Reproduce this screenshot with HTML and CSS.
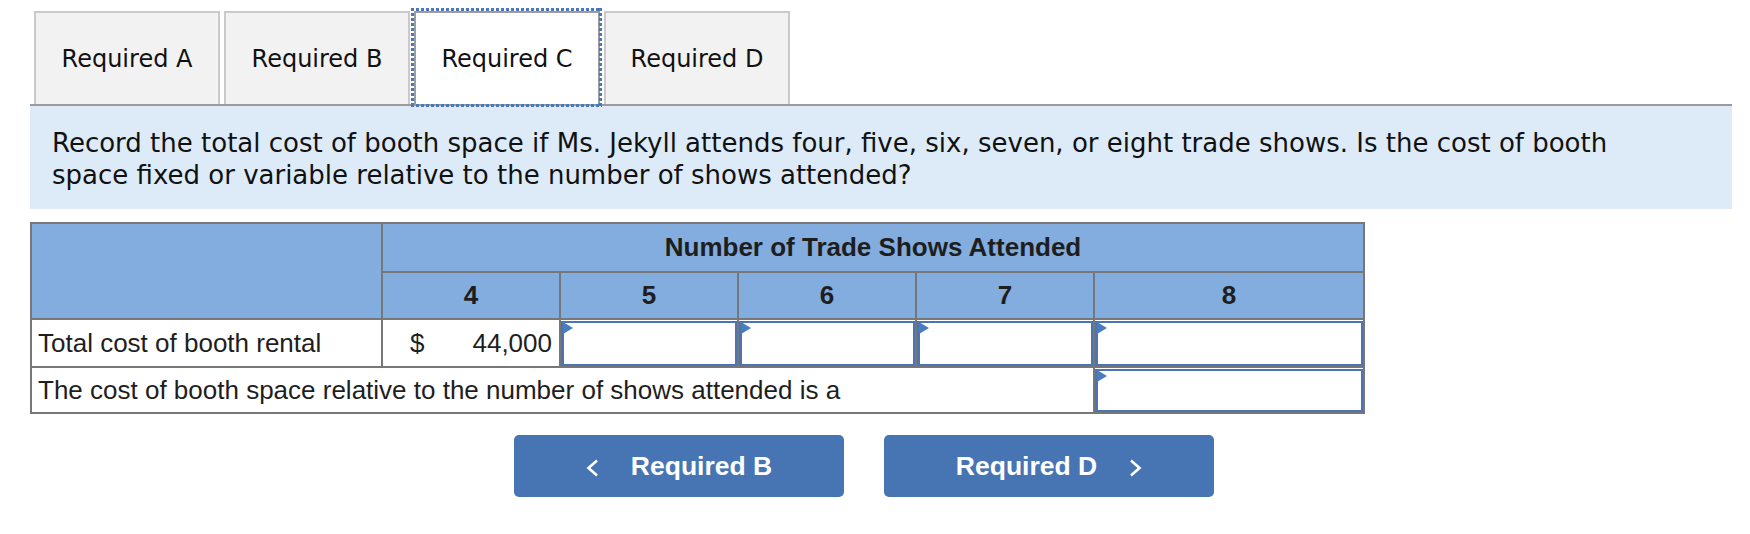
FILE: index.html
```html
<!DOCTYPE html>
<html lang="en">
  <head>
    <meta charset="UTF-8">
    <title>Required C</title>
    <link rel="stylesheet" href="styles.css">
  </head>
  <body>
    <div class="page">
      <div class="tabs">
        <div class="tab">Required A</div>
        <div class="tab">Required B</div>
        <div class="tab active">Required C</div>
        <div class="tab">Required D</div>
      </div>

      <div class="prompt">
        Record the total cost of booth space if Ms. Jekyll attends four, five, six, seven, or eight trade shows. Is the cost of booth space fixed or variable relative to the number of shows attended?
      </div>

      <table class="grid">
        <colgroup>
          <col class="c-label"><col class="c-num"><col class="c-num"><col class="c-num"><col class="c-num"><col class="c-last">
        </colgroup>
        <tr class="head-1">
          <th rowspan="2"></th>
          <th colspan="5">Number of Trade Shows Attended</th>
        </tr>
        <tr class="head-2">
          <th>4</th><th>5</th><th>6</th><th>7</th><th>8</th>
        </tr>
        <tr class="row-1">
          <td class="label">Total cost of booth rental</td>
          <td class="money"><span>$</span><span>44,000</span></td>
          <td class="cell"><div class="entry"></div></td>
          <td class="cell"><div class="entry"></div></td>
          <td class="cell"><div class="entry"></div></td>
          <td class="cell"><div class="entry"></div></td>
        </tr>
        <tr class="row-2">
          <td class="label" colspan="5">The cost of booth space relative to the number of shows attended is a</td>
          <td class="cell"><div class="entry"></div></td>
        </tr>
      </table>

      <div class="nav">
        <button class="nav-btn">
          <svg class="chev" width="13" height="18" viewBox="0 0 13 18"><polyline points="11,1.5 2.5,9 11,16.5" fill="none" stroke="#fff" stroke-width="2.6"/></svg>
          <span>Required B</span>
        </button>
        <button class="nav-btn">
          <span>Required D</span>
          <svg class="chev" width="13" height="18" viewBox="0 0 13 18"><polyline points="2,1.5 10.5,9 2,16.5" fill="none" stroke="#fff" stroke-width="2.6"/></svg>
        </button>
      </div>
    </div>
  </body>
</html>
```

FILE: styles.css
```css
html,
body {
  margin: 0;
  background-color: #ffffff;
  color: #111111;
}
.page {
  padding: 11px 0 0 30px;
}

/* tabs */
.tabs {
  display: flex;
  gap: 4px;
  margin-left: 4px;
}
.tab {
  width: 186px;
  height: 93px;
  box-sizing: border-box;
  display: flex;
  align-items: center;
  justify-content: center;
  background-color: #f2f2f2;
  border: 2px solid #cacaca;
  border-bottom: none;
  font-family: "DejaVu Sans", Verdana, sans-serif;
  font-size: 24px;
}
.tab.active {
  position: relative;
  background-color: #ffffff;
  border-color: #9c9c9c;
}
.tab.active::after {
  content: "";
  position: absolute;
  left: -5px;
  right: -4px;
  top: -5px;
  bottom: -3px;
  z-index: 2;
  background:
    repeating-linear-gradient(90deg, #4a78bd 0 3px, transparent 3px 5px) top / 100% 3px no-repeat,
    repeating-linear-gradient(90deg, #4a78bd 0 3px, transparent 3px 5px) bottom / 100% 3px no-repeat,
    repeating-linear-gradient(180deg, #4a78bd 0 3px, transparent 3px 5px) left / 3px 100% no-repeat,
    repeating-linear-gradient(180deg, #4a78bd 0 3px, transparent 3px 5px) right / 3px 100% no-repeat;
}

/* question */
.prompt {
  width: 1702px;
  box-sizing: border-box;
  background-color: #ddebf8;
  border-top: 2px solid #9b9b9b;
  padding: 21px 80px 18px 22px;
  font-family: "DejaVu Sans", Verdana, sans-serif;
  font-size: 26px;
  line-height: 32px;
}

/* table */
.grid {
  margin-top: 13px;
  width: 1333px;
  table-layout: fixed;
  border-collapse: collapse;
  font-family: "Liberation Sans", Arial, sans-serif;
  font-size: 26px;
  color: #1e1e1e;
}
.c-label { width: 351px; }
.c-num { width: 178px; }
.c-last { width: 270px; }
.grid th,
.grid td {
  border: 2px solid #777777;
  padding: 0;
}
.grid th {
  background-color: #83acdf;
  font-weight: bold;
  text-align: center;
}
.head-1 { height: 49px; }
.head-2 { height: 47px; }
.row-1 { height: 48px; }
.row-2 { height: 46px; }
.grid td.label {
  padding-left: 6px;
}
.grid td.money {
  padding: 0 7px 0 27px;
}
.money {
  white-space: nowrap;
}
.money span:first-child {
  float: left;
}
.money span:last-child {
  float: right;
}
.grid td.cell {
  padding: 0;
}
.entry {
  position: relative;
  height: 45px;
  box-sizing: border-box;
  border: 2px solid #4a74b3;
  border-left-width: 3px;
}
.row-2 .entry {
  height: 43px;
}
.entry::before {
  content: "";
  position: absolute;
  left: -1px;
  top: -1px;
  border-left: 10px solid #4a7cc0;
  border-top: 6px solid transparent;
  border-bottom: 6px solid transparent;
}

/* nav buttons */
.nav {
  display: flex;
  gap: 40px;
  margin: 21px 0 0 484px;
}
.nav-btn {
  width: 330px;
  height: 62px;
  display: flex;
  align-items: center;
  justify-content: center;
  gap: 32px;
  border: none;
  border-radius: 5px;
  background-color: #4775b3;
  color: #ffffff;
  font-family: "Liberation Sans", Arial, sans-serif;
  font-weight: bold;
  font-size: 26.5px;
}
.chev {
  margin-top: 3px;
}
```
